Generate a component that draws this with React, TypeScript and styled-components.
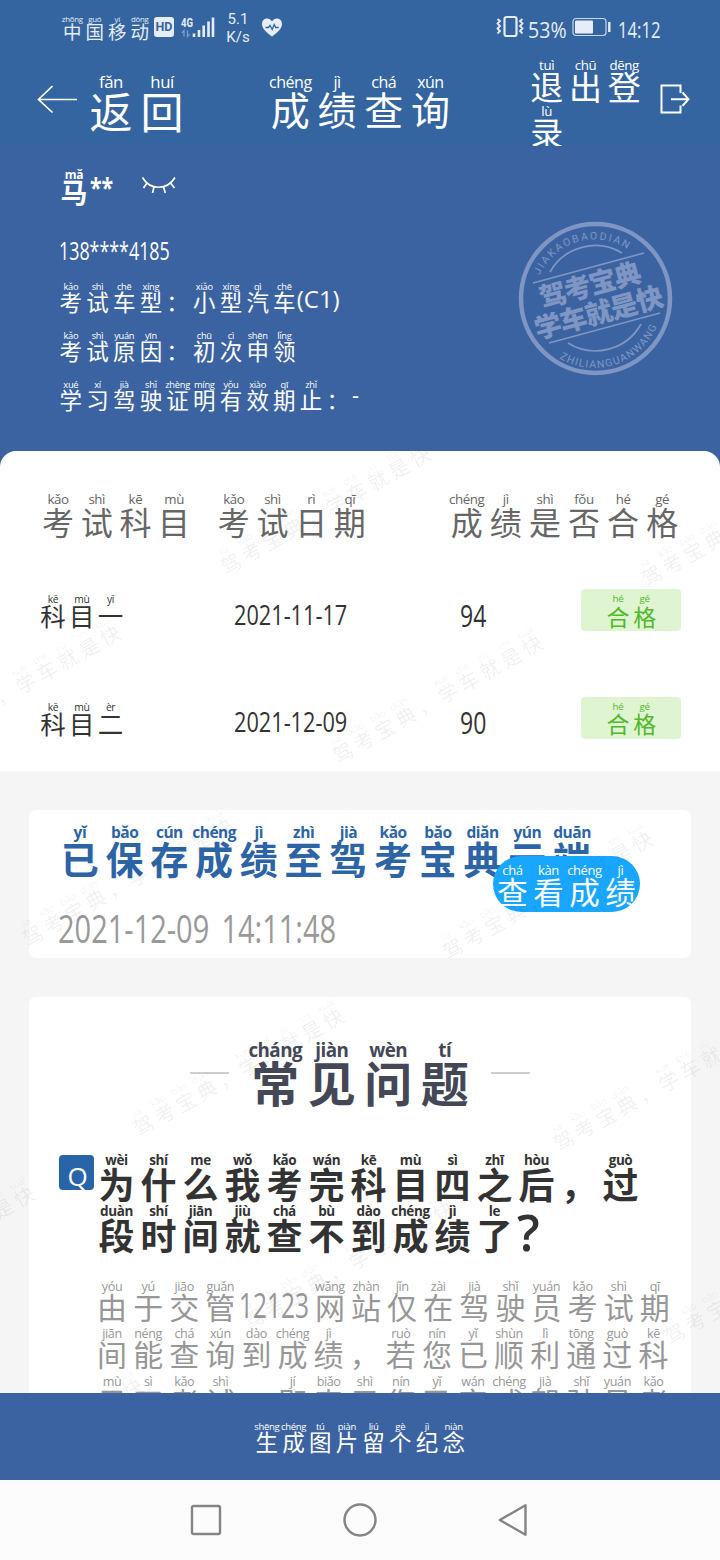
import React from 'react';
import styled, { createGlobalStyle, css } from 'styled-components';

const GlobalStyle = createGlobalStyle`
  * { box-sizing: border-box; }
  body { margin: 0; background: #f5f5f5; }
`;

const hanFont = '"Noto Sans CJK SC", sans-serif';
const latinFont = '"Open Sans", "Noto Sans", sans-serif';

/* ---------- annotated text ---------- */

interface RubyStyle {
  $cell: number;
  $size: number;
  $py: number;
  $row: number;
}

const RubyLine = styled.div<RubyStyle & { $weight?: number; $top?: number; $left?: number }>`
  display: flex;
  flex: none;
  font-weight: ${p => p.$weight ?? 400};
  margin-top: ${p => p.$top ?? 0}px;
  margin-left: ${p => p.$left ?? 0}px;
  height: ${p => p.$row * 2}px;
  & > span {
    display: flex;
    flex-direction: column;
    align-items: center;
    flex: none;
    width: ${p => p.$cell}px;
  }
  & i {
    font: inherit;
    font-family: ${latinFont};
    font-weight: ${p => p.$weight ?? 500};
    font-size: ${p => p.$py}px;
    line-height: ${p => p.$row}px;
    height: ${p => p.$row}px;
    letter-spacing: -0.03em;
    white-space: nowrap;
  }
  & b {
    font: inherit;
    font-family: ${hanFont};
    font-size: ${p => p.$size}px;
    line-height: ${p => p.$row}px;
    height: ${p => p.$row}px;
  }
`;

interface RubyProps {
  text: string;
  cell: number;
  size: number;
  py: number;
  row: number;
  weight?: number;
  top?: number;
  left?: number;
}

/* Each token is one Chinese character followed by its pinyin. */
const Ruby = ({ text, cell, size, py, row, weight, top, left }: RubyProps) => (
  <RubyLine $cell={cell} $size={size} $py={py} $row={row} $weight={weight} $top={top} $left={left}>
    {text.split(' ').map((t, i) => (
      <span key={i}>
        <i>{t.slice(1)}</i>
        <b>{t[0]}</b>
      </span>
    ))}
  </RubyLine>
);

const Narrow = styled.div<{ $size: number; $w: number; $sx: number; $top?: number; $left?: number; $weight?: number; $gap?: number }>`
  flex: none;
  width: ${p => p.$w}px;
  height: ${p => p.$size}px;
  margin-top: ${p => p.$top ?? 0}px;
  margin-left: ${p => p.$left ?? 0}px;
  font-family: ${latinFont};
  font-weight: ${p => p.$weight ?? 400};
  font-size: ${p => p.$size}px;
  line-height: ${p => p.$size}px;
  word-spacing: ${p => p.$gap ?? 0}px;
  white-space: pre;
  transform: scaleX(${p => p.$sx});
  transform-origin: left center;
`;

/* ---------- frame ---------- */

const Screen = styled.div`
  width: 720px;
  height: 1560px;
  display: flex;
  flex-direction: column;
  overflow: hidden;
  background: #f5f5f5;
`;

const row = css`
  display: flex;
  align-items: flex-start;
`;

const StatusBar = styled.div`
  ${row}
  height: 50px;
  flex: none;
  background: #3565a0;
  color: #e6edf6;
`;

const HdBadge = styled.div`
  width: 20px;
  height: 20px;
  margin: 17px 0 0 3px;
  border-radius: 3px;
  background: #e6edf6;
  color: #3565a0;
  font: 700 12.5px/20px Roboto, sans-serif;
  text-align: center;
`;

const Speed = styled.div`
  width: 24px;
  margin: 10px 0 0 10px;
  font: 400 15px/18px Roboto, sans-serif;
  text-align: center;
`;

const StatusIcon = styled.svg<{ $left: number; $top: number }>`
  flex: none;
  margin: ${p => p.$top}px 0 0 ${p => p.$left}px;
`;

const Header = styled.div`
  ${row}
  height: 96px;
  flex: none;
  background: #3565a0;
  color: #fff;
`;

const Logout = styled.div`
  display: flex;
  flex-direction: column;
  gap: 3px;
  width: 120px;
  margin: 5px 0 0 73.5px;
`;

const Profile = styled.section`
  height: 305px;
  flex: none;
  display: flex;
  justify-content: space-between;
  background: #3c63a1;
  color: #fff;
`;

const ProfileInfo = styled.div`
  display: flex;
  flex-direction: column;
`;

const Row = styled.div<{ $h?: number }>`
  ${row}
  ${p => p.$h && `height: ${p.$h}px;`}
`;

const InfoRows = styled.div`
  display: flex;
  flex-direction: column;
  gap: 18.7px;
  margin: 15.5px 0 0 57.5px;
`;

const Stamp = styled.svg`
  margin: 73px 45px 0 0;
`;

/* ---------- content ---------- */

const Content = styled.main`
  position: relative;
  height: 942px;
  flex: none;
  overflow: hidden;
  background: #f5f5f5;
`;

const Backdrop = styled.div`
  background: #3c63a1;
`;

const Results = styled.section`
  height: 320px;
  border-radius: 16px 16px 0 0;
  background: #fff;
  color: #333;
`;

const ResultHead = styled.div`
  ${row}
  height: 138px;
  padding-top: 38px;
  color: #666;
`;

const ResultRow = styled.div`
  ${row}
  height: 107.5px;
`;

const PassBadge = styled.div`
  ${row}
  justify-content: center;
  width: 100px;
  height: 42px;
  margin-left: 93.3px;
  padding-top: 2.3px;
  border-radius: 4px;
  background: #dff5d2;
  color: #52b82c;
`;

const Card = styled.section<{ $h: number }>`
  position: relative;
  width: 662px;
  height: ${p => p.$h}px;
  margin: 39px 0 0 29px;
  border-radius: 7px;
  background: #fff;
`;

const SavedTitle = styled.div`
  padding-top: 8.5px;
  color: #2c64a6;
`;

const SavedTime = styled.div`
  color: #999;
`;

const ViewButton = styled.button`
  position: absolute;
  left: 464px;
  top: 46px;
  display: flex;
  align-items: flex-start;
  width: 147px;
  height: 56px;
  padding: 4px 0 0 1.5px;
  border: 0;
  border-radius: 28px;
  background: #18a6ff;
  color: #fff;
`;

const FaqTitle = styled.div`
  display: flex;
  justify-content: center;
  align-items: flex-start;
  padding-top: 37.5px;
  height: 152px;
  color: #444856;
`;

const Rule = styled.div`
  width: 39px;
  height: 2px;
  margin: 37.5px 18px 0;
  background: #cfcfd3;
`;

const QMark = styled.div`
  flex: none;
  width: 35px;
  height: 35px;
  margin: 5.5px 0 0 30px;
  padding: 8px 0 0 2px;
  border-radius: 4px;
  background: #2a64a8;
  color: #fff;
  text-align: center;
  font: 500 26px/27px ${latinFont};
  overflow: hidden;
`;

const Question = styled.div`
  display: flex;
  flex-direction: column;
  gap: 4.6px;
  margin-left: 1.5px;
  color: #333;
`;

const Answer = styled.div`
  display: flex;
  flex-direction: column;
  gap: 7.6px;
  margin: 30.5px 0 0 65px;
  color: #979797;
`;

/* ---------- watermark ---------- */

const WatermarkLayer = styled.div`
  position: absolute;
  inset: 0;
  overflow: hidden;
  pointer-events: none;
  color: rgba(40, 40, 60, 0.08);
`;

const Mark = styled.div<{ $x: number; $y: number }>`
  position: absolute;
  left: ${p => p.$x - 11}px;
  top: ${p => p.$y - 451 - 20}px;
  transform: rotate(-29.5deg);
  transform-origin: 11px 20px;
`;

const marks: Array<[number, number]> = [
  [229, 563], [650, 575], [-81, 742], [341, 752], [31, 935], [451, 948],
  [142, 1125], [562, 1140], [-167, 1303], [252, 1318], [673, 1333],
  [-59, 1495], [362, 1510],
];

/* ---------- bottom ---------- */

const ShareBar = styled.div`
  ${row}
  height: 87px;
  flex: none;
  background: #3c63a1;
  color: #fff;
`;

const NavBar = styled.nav`
  display: flex;
  justify-content: center;
  align-items: center;
  gap: 121px;
  height: 80px;
  padding-right: 2px;
  flex: none;
  background: #fcfcfc;
`;

const results = [
  { subject: '科kē 目mù 一yī', date: '2021-11-17', score: '94' },
  { subject: '科kē 目mù 二èr', date: '2021-12-09', score: '90' },
];

const info = { cell: 26.7, size: 22.5, py: 9.3, row: 15.3 };
const head = { size: 32, py: 13.3, row: 21.9 };
const ask = { cell: 42, size: 36, py: 13.5, row: 23.2, weight: 700 };
const reply = { cell: 36.1, size: 30, py: 12.6, row: 19.9 };

export default function App() {
  return (
    <Screen>
      <GlobalStyle />

      <StatusBar>
        <Ruby text="中zhōng 国guó 移yí 动dòng" cell={22.5} size={18.5} py={7.8} row={12.4} top={12.9} left={61} />
        <HdBadge>HD</HdBadge>
        <StatusIcon $left={6} $top={14} width="36" height="25" viewBox="0 0 36 25">
          <text x="1" y="12.5" fontFamily="Roboto, sans-serif" fontWeight="700" fontSize="13" textLength="12" lengthAdjust="spacingAndGlyphs" fill="#e6edf6">4G</text>
          <path d="M4 22.5v-6l-2 2.4M7.5 16.5v6l2-2.4" fill="none" stroke="#7f9fc7" strokeWidth="1.3" />
          <path d="M14 23v-3.5M19 23v-7M23.7 23V11.5M28.5 23V7.5M33 23V3.5" stroke="#e6edf6" strokeWidth="2.6" />
        </StatusIcon>
        <Speed>5.1<br />K/s</Speed>
        <StatusIcon $left={11} $top={17} width="22" height="21" viewBox="0 0 22 21">
          <path d="M11 19.5C5.5 15.5 1 11.5 1 7 1 3.7 3.3 1.5 6 1.5c2 0 3.800 1 5 2.900 1.200-1.900 3-2.900 5-2.900 2.700 0 5 2.200 5 5.500 0 4.500-4.500 8.500-10 12.500z" fill="#e6edf6" />
          <path d="M4.500 10.500h3l1.500-2 2.200 4 2-5 1.500 3h3" fill="none" stroke="#3565a0" strokeWidth="1.3" />
        </StatusIcon>
        <StatusIcon $left={213} $top={15} width="28" height="24" viewBox="0 0 28 24">
          <rect x="8.5" y="2" width="12" height="19" rx="2" fill="none" stroke="#e6edf6" strokeWidth="2.2" />
          <path d="M1.500 4l2.500 2-2.500 2.500L4 11l-2.500 2.500L4 16l-2.500 2.500M26.500 4L24 6l2.500 2.500L24 11l2.500 2.500L24 16l2.500 2.500" fill="none" stroke="#e6edf6" strokeWidth="1.8" />
        </StatusIcon>
        <Narrow $size={22} $w={38} $sx={0.89} $top={18} $left={4}>53%</Narrow>
        <StatusIcon $left={6} $top={17} width="40" height="20" viewBox="0 0 40 20">
          <rect x="1" y="1.5" width="33" height="17" rx="3" fill="none" stroke="#c9d7e8" strokeWidth="1.2" />
          <rect x="3" y="3.5" width="18" height="13" rx="1" fill="#e6edf6" />
          <path d="M37.300 5v10" stroke="#e6edf6" strokeWidth="2.4" />
        </StatusIcon>
        <Narrow $size={22} $w={44} $sx={0.76} $top={18} $left={6}>14:12</Narrow>
      </StatusBar>

      <Header>
        <StatusIcon $left={36} $top={34} width="42" height="30" viewBox="0 0 42 30">
          <path d="M16.500 2L2.500 15.500l14 13M2.500 15.500H41" fill="none" stroke="#fff" strokeWidth="1.7" />
        </StatusIcon>
        <Ruby text="返fǎn 回huí" cell={51} size={43} py={16.8} row={28} top={17.6} left={7.5} />
        <Ruby text="成chéng 绩jì 查chá 询xún" cell={46.7} size={39} py={16} row={26.6} top={18.5} left={79.5} />
        <Logout>
          <Ruby text="退tuì 出chū 登dēng" cell={38.8} size={33} py={13.3} row={21.3} />
          <Ruby text="录lù" cell={38.8} size={33} py={13.3} row={21.3} />
        </Logout>
        <StatusIcon $left={12} $top={33} width="32" height="32" viewBox="0 0 32 32">
          <path d="M21.500 10V2.500H2.500v27h19V22.500M12 16.200h17M23.500 9.500l6 6.700-6 6.700" fill="none" stroke="#fff" strokeWidth="2" />
        </StatusIcon>
      </Header>

      <Profile>
        <ProfileInfo>
          <Row $h={57}>
            <Ruby text="马mǎ" cell={28} size={27} py={12} row={17.2} weight={700} top={19.7} left={60} />
            <Narrow $size={26} $w={24} $sx={0.82} $weight={700} $top={29} $left={2}>**</Narrow>
            <StatusIcon $left={27} $top={30} width="36" height="20" viewBox="0 0 36 20">
              <path d="M1.500 1.500C9 14.500 26 14.500 34 1.500M6 7L2.500 12M13 11l-1.500 6M22.500 11l1.800 6M29.500 7l4 5" fill="none" stroke="#fff" strokeWidth="1.7" />
            </StatusIcon>
          </Row>
          <Narrow $size={25.5} $w={112} $sx={0.7} $top={34.5} $left={58.5}>138****4185</Narrow>
          <InfoRows>
            <Row $h={30.6}>
              <Ruby {...info} text="考kǎo 试shì 车chē 型xíng ： 小xiǎo 型xíng 汽qì 车chē" />
              <Narrow $size={24} $w={44} $sx={1} $top={8} $left={-1}>(C1)</Narrow>
            </Row>
            <Ruby {...info} text="考kǎo 试shì 原yuán 因yīn ： 初chū 次cì 申shēn 领lǐng" />
            <Row $h={30.6}>
              <Ruby {...info} text="学xué 习xí 驾jià 驶shǐ 证zhèng 明míng 有yǒu 效xiào 期qī 止zhǐ ：" />
              <Narrow $size={24} $w={12} $sx={0.9} $top={6} $left={1}>-</Narrow>
            </Row>
          </InfoRows>
        </ProfileInfo>
        <Stamp width="160" height="160" viewBox="0 0 160 160">
          <defs>
            <path id="arcTop" d="M22.500 62A60 60 0 0 1 136 60" />
            <path id="arcBottom" d="M37 134A68 68 0 0 0 146 67" />
          </defs>
          <g fill="none" stroke="#7f96c4">
            <circle cx="80.5" cy="79.5" r="74.5" strokeWidth="4.5" />
            <path d="M35 53A52 52 0 0 1 107 34" strokeWidth="1.7" />
            <path d="M53 124A52 52 0 0 0 126 105" strokeWidth="1.7" />
            <path d="M18 64L129 34M34 124L145 94" strokeWidth="1.6" />
          </g>
          <g fill="#7f96c4">
            <text fontFamily="Roboto, sans-serif" fontSize="10.5">
              <textPath href="#arcTop" startOffset="6" textLength="104">JIAKAOBAODIAN</textPath>
            </text>
            <text fontFamily="Roboto, sans-serif" fontSize="10.5">
              <textPath href="#arcBottom" startOffset="9" textLength="116">ZHILIANGUANWANG</textPath>
            </text>
            <g fontFamily={hanFont} fontWeight="900" fontSize="27" transform="rotate(-15 80 80)">
              <text x="27" y="75" textLength="104">驾考宝典</text>
              <text x="14" y="104" textLength="132">学车就是快</text>
            </g>
          </g>
        </Stamp>
      </Profile>

      <Content>
        <Backdrop>
          <Results>
            <ResultHead>
              <Ruby {...head} cell={38.7} left={38.7} text="考kǎo 试shì 科kē 目mù" />
              <Ruby {...head} cell={38.7} left={21} text="考kǎo 试shì 日rì 期qī" />
              <Ruby {...head} cell={39.1} left={78} text="成chéng 绩jì 是shì 否fǒu 合hé 格gé" />
            </ResultHead>
            {results.map(r => (
              <ResultRow key={r.date}>
                <Ruby text={r.subject} cell={28.8} size={25.5} py={10.3} row={16} top={2.4} left={38.6} />
                <Narrow $size={28} $w={114} $sx={0.775} $top={10.5} $left={109}>{r.date}</Narrow>
                <Narrow $size={31.5} $w={28} $sx={0.73} $top={9.5} $left={112}>{r.score}</Narrow>
                <PassBadge>
                  <Ruby text="合hé 格gé" cell={26.8} size={23} py={9.8} row={16.3} />
                </PassBadge>
              </ResultRow>
            ))}
          </Results>
        </Backdrop>

        <Card $h={148}>
          <SavedTitle>
            <Ruby
              text="已yǐ 保bǎo 存cún 成chéng 绩jì 至zhì 驾jià 考kǎo 宝bǎo 典diǎn 云yún 端duān"
              cell={44.75} size={38} py={15.5} row={26.3} weight={700} left={28.5}
            />
          </SavedTitle>
          <SavedTime>
            <Narrow $size={37.5} $w={280} $sx={0.773} $gap={6} $top={38.5} $left={28.5}>2021-12-09 14:11:48</Narrow>
          </SavedTime>
          <ViewButton>
            <Ruby text="查chá 看kàn 成chéng 绩jì" cell={36} size={30.5} py={13} row={20.8} />
          </ViewButton>
        </Card>

        <Card $h={420}>
          <FaqTitle>
            <Rule />
            <Ruby text="常cháng 见jiàn 问wèn 题tí" cell={56.5} size={48} py={18.8} row={31.7} weight={700} />
            <Rule />
          </FaqTitle>
          <Row>
            <QMark>Q</QMark>
            <Question>
              <Ruby {...ask} text="为wèi 什shí 么me 我wǒ 考kǎo 完wán 科kē 目mù 四sì 之zhī 后hòu ， 过guò" />
              <Row $h={46.4}>
                <Ruby {...ask} text="段duàn 时shí 间jiān 就jiù 查chá 不bù 到dào 成chéng 绩jì 了le" />
                <Narrow $size={50} $w={26} $sx={1} $weight={600} $top={7} $left={1.5}>?</Narrow>
              </Row>
            </Question>
          </Row>
          <Answer>
            <Row $h={39.8}>
              <Ruby {...reply} text="由yóu 于yú 交jiāo 管guǎn" />
              <Narrow $size={35} $w={72.5} $sx={0.7} $top={10} $left={1}>12123</Narrow>
              <Ruby {...reply} text="网wǎng 站zhàn 仅jǐn 在zài 驾jià 驶shǐ 员yuán 考kǎo 试shì 期qī" />
            </Row>
            <Ruby {...reply} text="间jiān 能néng 查chá 询xún 到dào 成chéng 绩jì ， 若ruò 您nín 已yǐ 顺shùn 利lì 通tōng 过guò 科kē" />
            <Ruby {...reply} text="目mù 四sì 考kǎo 试shì ， 即jí 表biǎo 示shì 您nín 已yǐ 完wán 成chéng 驾jià 驶shǐ 员yuán 考kǎo" />
          </Answer>
        </Card>

        <WatermarkLayer>
          {marks.map(([x, y]) => (
            <Mark key={`${x}-${y}`} $x={x} $y={y}>
              <Ruby
                text="驾jià 考kǎo 宝bǎo 典diǎn ， 学xué 车chē 就jiù 是shì 快kuài"
                cell={24.2} size={20} py={9.8} row={14}
              />
            </Mark>
          ))}
        </WatermarkLayer>
      </Content>

      <ShareBar>
        <Ruby text="生shēng 成chéng 图tú 片piàn 留liú 个gè 纪jì 念niàn" cell={26.7} size={22.5} py={9.5} row={15} top={26} left={253.5} />
      </ShareBar>

      <NavBar>
        <svg width="32" height="32" viewBox="0 0 32 32">
          <rect x="2" y="2" width="28" height="28" rx="1.5" fill="none" stroke="#858585" strokeWidth="2.4" />
        </svg>
        <svg width="34" height="34" viewBox="0 0 34 34">
          <circle cx="17" cy="17" r="15.5" fill="none" stroke="#858585" strokeWidth="2.4" />
        </svg>
        <svg width="30" height="34" viewBox="0 0 30 34">
          <path d="M27.500 2.200v29.600L1.800 17z" fill="none" stroke="#858585" strokeWidth="2.4" strokeLinejoin="round" />
        </svg>
      </NavBar>
    </Screen>
  );
}
